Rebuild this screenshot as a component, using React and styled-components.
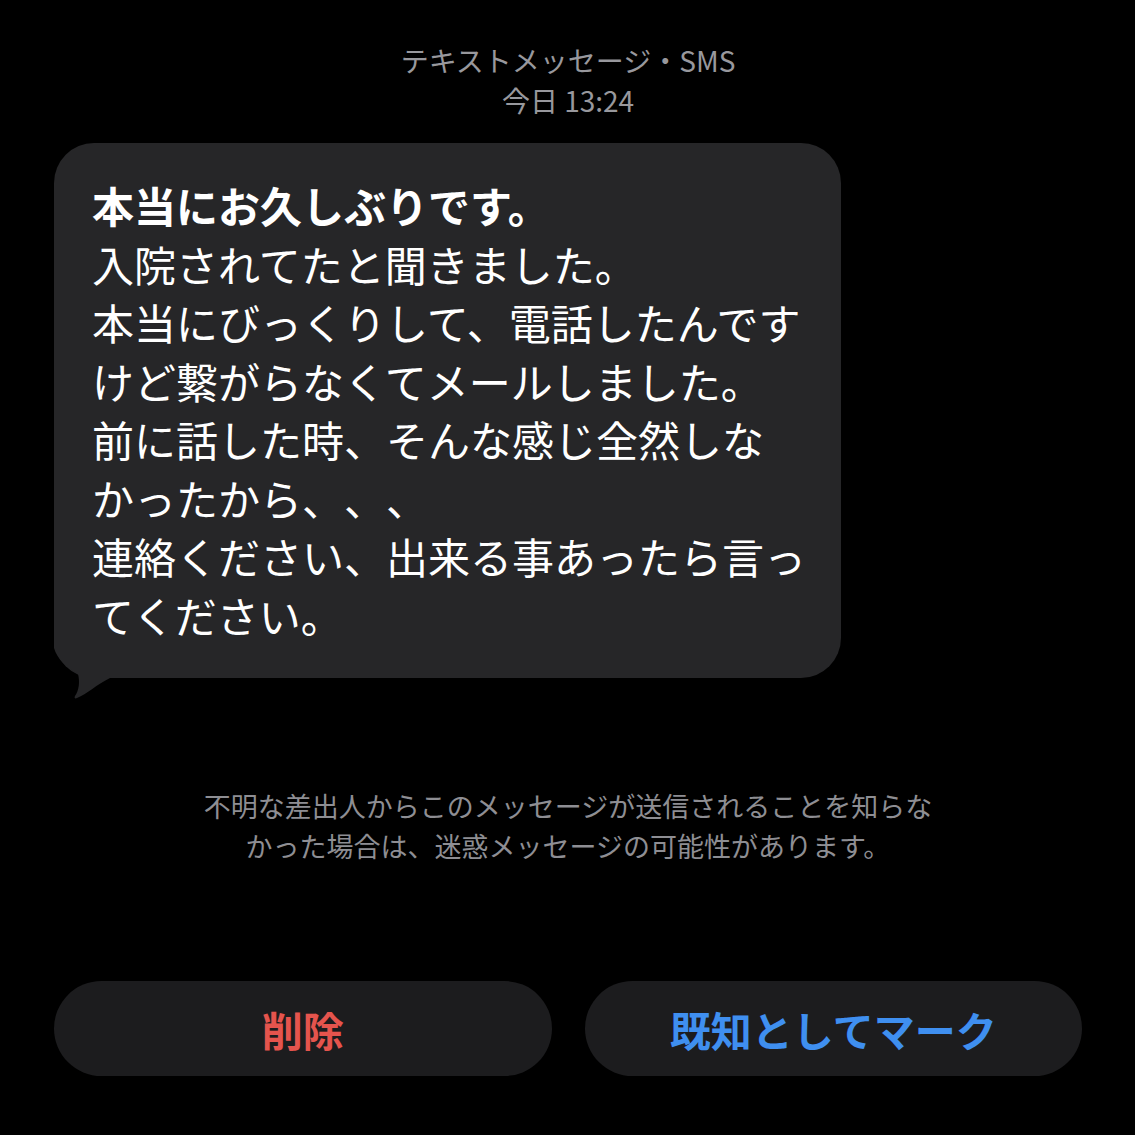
import React from 'react';
import styled, { createGlobalStyle } from 'styled-components';

const GlobalStyle = createGlobalStyle`
    html, body {
        margin: 0;
        padding: 0;
        background: #000;
    }
    body {
        font-family: "Noto Sans CJK JP", "Noto Sans", sans-serif;
        -webkit-font-smoothing: antialiased;
        text-spacing-trim: space-all;
    }
`;

const bodyLines = [
    '入院されてたと聞きました。',
    '本当にびっくりして、電話したんです',
    'けど繋がらなくてメールしました。',
    '前に話した時、そんな感じ全然しな',
    'かったから、、、',
    '連絡ください、出来る事あったら言っ',
    'てください。',
];

const noticeLines = [
    '不明な差出人からこのメッセージが送信されることを知らな',
    'かった場合は、迷惑メッセージの可能性があります。',
];

const App = () => {
    return (
        <>
            <GlobalStyle />
            <Screen>
                <Header>
                    <HeaderLine>テキストメッセージ・SMS</HeaderLine>
                    <HeaderLine>今日 13:24</HeaderLine>
                </Header>

                <Thread>
                    <Bubble>
                        <Tail viewBox="0 0 70 72" width="70" height="72">
                            <path d="M0 0 L0 20 C3 31 13 40 24 46 C26 54 25 62 21 68 C20 70 21 71 23 70 C33 66 42 57 56 50 L70 50 L70 0 Z" />
                        </Tail>
                        <MessageLine $bold>本当にお久しぶりです。</MessageLine>
                        {bodyLines.map((line) => (
                            <MessageLine key={line}>{line}</MessageLine>
                        ))}
                    </Bubble>
                </Thread>

                <Notice>
                    {noticeLines.map((line) => (
                        <NoticeLine key={line}>{line}</NoticeLine>
                    ))}
                </Notice>

                <Actions>
                    <ActionButton $color="#e5544d">削除</ActionButton>
                    <ActionButton $color="#3f8ff0">既知としてマーク</ActionButton>
                </Actions>
            </Screen>
        </>
    )
};

const Screen = styled.div`
    width: 1135px;
    height: 1135px;
    box-sizing: border-box;
    padding: 40px 53px 0 54px;
    background: #000;
    display: flex;
    flex-direction: column;
    overflow: hidden;
`;

const Header = styled.div`
    display: flex;
    flex-direction: column;
    align-items: center;
    color: #98989d;
    font-size: 28px;
    line-height: 40px;
`;

const HeaderLine = styled.div`
    white-space: nowrap;
`;

const Thread = styled.div`
    margin-top: 23px;
    display: flex;
`;

const Bubble = styled.div`
    position: relative;
    width: 787px;
    height: 535px;
    box-sizing: border-box;
    padding: 33px 20px 0 38px;
    background: #262628;
    border-radius: 40px;
    color: #fff;
    font-size: 42px;
    line-height: 58.5px;
`;

const MessageLine = styled.div`
    position: relative;
    white-space: nowrap;
    font-weight: ${(p) => (p.$bold ? 700 : 400)};
`;

const Tail = styled.svg`
    position: absolute;
    left: 0;
    top: 485px;
    fill: #262628;
`;

const Notice = styled.div`
    margin-top: 108px;
    display: flex;
    flex-direction: column;
    align-items: center;
    color: #8e8e93;
    font-size: 27px;
    line-height: 40px;
`;

const NoticeLine = styled.div`
    white-space: nowrap;
`;

const Actions = styled.div`
    margin-top: 115px;
    display: grid;
    grid-template-columns: 1fr 1fr;
    gap: 33px;
`;

const ActionButton = styled.button`
    height: 95px;
    border: none;
    border-radius: 48px;
    background: #1c1c1e;
    color: ${(p) => p.$color};
    font-family: "Noto Sans CJK JP", "Noto Sans", sans-serif;
    font-size: 41px;
    font-weight: 700;
    padding: 0;
    display: flex;
    align-items: center;
    justify-content: center;
`;

export default App
